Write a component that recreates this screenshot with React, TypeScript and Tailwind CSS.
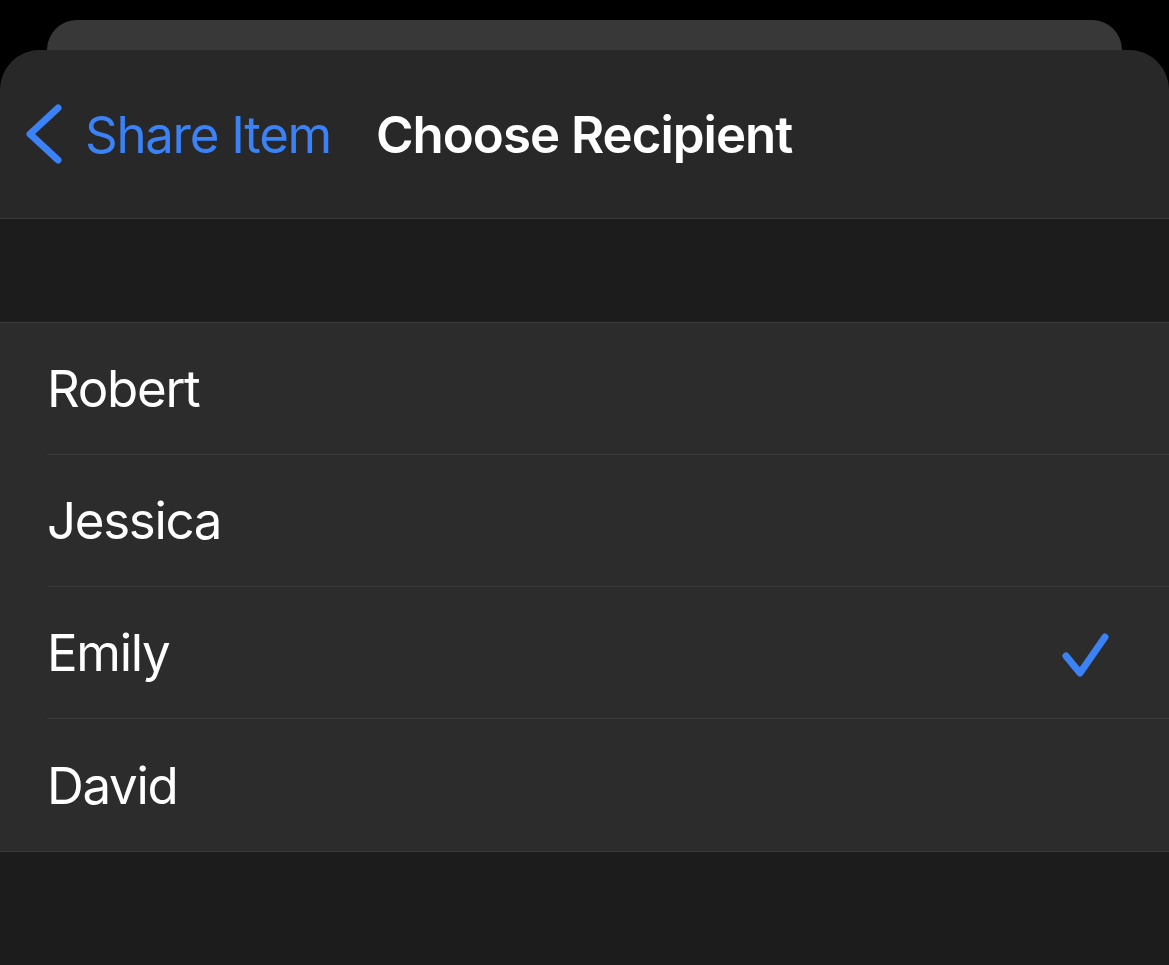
import React from 'react';

const recipients = ['Robert', 'Jessica', 'Emily', 'David'];
const selected = 'Emily';

const font = { fontFamily: 'Inter, "Noto Sans", sans-serif' };

const App: React.FC = () => {
  return (
    <div className="w-[1169px] h-[965px] bg-black overflow-hidden flex flex-col" style={font}>
      {/* sheet behind */}
      <div className="mx-[47px] mt-[20px] h-[60px] shrink-0 rounded-t-[30px] bg-[#383838]" />

      {/* front sheet */}
      <div className="-mt-[30px] flex-1 rounded-t-[40px] overflow-hidden bg-[#1c1c1c] flex flex-col">
        <div className="h-[169px] shrink-0 bg-[#282828] border-b border-[#3a3a3a] flex items-center pl-[25px]">
          <svg width="40" height="62" viewBox="0 0 40 62" fill="none">
            <path
              d="M33 5 L5 31 L33 57"
              stroke="#3a82f6"
              strokeWidth="7"
              strokeLinecap="round"
              strokeLinejoin="round"
            />
          </svg>
          <span className="ml-[20px] text-[51px] leading-none text-[#3a82f6] tracking-[-1.3px]">Share Item</span>
          <span className="ml-[45px] text-[51px] leading-none font-semibold text-white tracking-[-1px]">
            Choose Recipient
          </span>
        </div>

        <div className="h-[103px] shrink-0" />

        <div className="bg-[#2c2c2c] border-t border-b border-[#3a3a3a]">
          {recipients.map((name, index) => (
            <div key={name} className="ml-[47px]">
              <div
                className={`h-[132px] flex items-center justify-between pr-[59px] ${
                  index < recipients.length - 1 ? 'border-b border-[#3a3a3a]' : ''
                }`}
              >
                <span className="text-[51px] leading-none text-white tracking-[-1.3px]">{name}</span>
                {name === selected && (
                  <svg width="50" height="50" viewBox="0 0 50 50" fill="none">
                    <path
                      d="M6 28 L20 45 L45 9"
                      stroke="#3a82f6"
                      strokeWidth="7"
                      strokeLinecap="round"
                      strokeLinejoin="round"
                    />
                  </svg>
                )}
              </div>
            </div>
          ))}
        </div>
      </div>
    </div>
  );
};

export default App;
